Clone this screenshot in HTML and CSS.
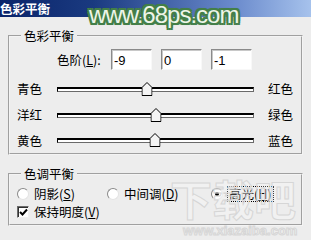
FILE: index.html
```html
<!DOCTYPE html>
<html lang="zh-CN">
<head>
    <meta charset="UTF-8">
    <title>色彩平衡</title>
    <link rel="stylesheet" href="styles.css">
</head>
<body>

    <div class="titlebar">色彩平衡</div>

    <div class="dialog">
        <fieldset class="group balance">
            <legend>色彩平衡</legend>

            <div class="levels">
                <label class="levels-label">色阶(<u>L</u>):</label>
                <input class="num" type="text" value="-9">
                <input class="num" type="text" value="0">
                <input class="num" type="text" value="-1">
            </div>

            <div class="slider-row">
                <span class="end">青色</span>
                <div class="track">
                    <span class="thumb" style="left: 45.5%">
                        <svg width="11" height="14" viewBox="0 0 11 14"><polygon points="0.5,13.5 0.5,5.5 5.5,0.5 10.5,5.5 10.5,13.5" fill="#f4f4f4" stroke="#000"/></svg>
                    </span>
                </div>
                <span class="end right">红色</span>
            </div>

            <div class="slider-row">
                <span class="end">洋红</span>
                <div class="track">
                    <span class="thumb" style="left: 50%">
                        <svg width="11" height="14" viewBox="0 0 11 14"><polygon points="0.5,13.5 0.5,5.5 5.5,0.5 10.5,5.5 10.5,13.5" fill="#f4f4f4" stroke="#000"/></svg>
                    </span>
                </div>
                <span class="end right">绿色</span>
            </div>

            <div class="slider-row">
                <span class="end">黄色</span>
                <div class="track">
                    <span class="thumb" style="left: 49.5%">
                        <svg width="11" height="14" viewBox="0 0 11 14"><polygon points="0.5,13.5 0.5,5.5 5.5,0.5 10.5,5.5 10.5,13.5" fill="#f4f4f4" stroke="#000"/></svg>
                    </span>
                </div>
                <span class="end right">蓝色</span>
            </div>
        </fieldset>

        <fieldset class="group tone">
            <legend>色调平衡</legend>

            <div class="radios">
                <div class="option">
                    <span class="radio"></span>
                    <span class="opt-text">阴影(<u>S</u>)</span>
                </div>
                <div class="option">
                    <span class="radio"></span>
                    <span class="opt-text">中间调(<u>D</u>)</span>
                </div>
                <div class="option">
                    <span class="radio checked"></span>
                    <span class="opt-text focus">高光(<u>H</u>)</span>
                </div>
            </div>

            <div class="option check-row">
                <span class="checkbox">
                    <svg width="9" height="9" viewBox="0 0 9 9"><path d="M1 4 L3.5 6.5 L8 1.5" fill="none" stroke="#000" stroke-width="2"/></svg>
                </span>
                <span class="opt-text">保持明度(<u>V</u>)</span>
            </div>
        </fieldset>
    </div>

    <!-- watermarks laid over the screenshot -->
    <div class="watermark">www.68ps.com</div>
    <div class="xzb">下载吧</div>
    <div class="xzb-url">www.xiazaiba.com</div>

</body>
</html>
```

FILE: styles.css
```css
body {
    margin: 0;
    padding: 0;
    width: 311px;
    height: 240px;
    overflow: hidden;
    background-color: #ededed;
    font-family: "Noto Sans CJK SC", "Liberation Sans", sans-serif;
    font-size: 12.5px;
    color: #000;
    position: relative;
}

.titlebar {
    height: 17px;
    line-height: 17px;
    padding-left: 0;
    background: linear-gradient(to right, #0a246a 0%, #1a3a80 30%, #6a8acc 75%, #a6c2ec 100%);
    color: #fff;
    font-weight: bold;
    font-size: 12.5px;
}

.dialog {
    padding: 12px 8px 0 8px;
}

.group {
    margin: 0;
    border: 2px groove #f4f4f4;
    padding: 6px 8px 0 7px;
}

.group legend {
    margin-left: 4px;
    padding: 0 3px;
    line-height: 14px;
    height: 14px;
}

.levels {
    display: flex;
    align-items: center;
    gap: 9px;
    padding-left: 40px;
    height: 21px;
    margin-bottom: 6px;
}

.levels-label {
    width: 45px;
    white-space: nowrap;
    line-height: 14px;
}

.num {
    box-sizing: border-box;
    width: 41px;
    height: 21px;
    margin: 0;
    padding: 1px 2px 0 2px;
    font-family: "Liberation Sans", sans-serif;
    font-size: 13px;
    background-color: #fff;
    border: 1px solid;
    border-color: #8a8a8a #f8f8f8 #f8f8f8 #8a8a8a;
    box-shadow: inset 1px 1px #c8c8c8;
    outline: none;
}

.slider-row {
    display: grid;
    grid-template-columns: 40px 197px 1fr;
    align-items: center;
    height: 26px;
}

.slider-row:last-child {
    height: 25px;
}

.end {
    line-height: 14px;
}

.end.right {
    padding-left: 14px;
}

.track {
    position: relative;
    box-sizing: border-box;
    height: 5px;
    background-color: #fff;
    border: 1px solid #000;
    border-top-width: 2px;
    border-bottom-color: #6a6a6a;
    border-right-color: #6a6a6a;
}

.thumb {
    position: absolute;
    top: -7px;
    width: 11px;
    height: 14px;
    transform: translateX(-50%);
}

.thumb svg {
    display: block;
}

.tone {
    margin-top: 12px;
    padding-top: 4px;
    padding-bottom: 3px;
}

.radios {
    display: grid;
    grid-template-columns: 90px 104px auto;
    height: 18px;
    align-items: center;
}

.option {
    display: flex;
    align-items: center;
}

.check-row {
    height: 18px;
}

.radio {
    box-sizing: border-box;
    width: 12px;
    height: 12px;
    border-radius: 50%;
    background-color: #fff;
    border: 1px solid;
    border-color: #8a8a8a #e4e4e4 #e4e4e4 #8a8a8a;
    display: flex;
    align-items: center;
    justify-content: center;
}

.radio.checked::after {
    content: "";
    width: 4px;
    height: 4px;
    border-radius: 50%;
    background-color: #000;
}

.checkbox {
    box-sizing: border-box;
    width: 12px;
    height: 12px;
    background-color: #fff;
    border: 1px solid;
    border-color: #6a6a6a #f0f0f0 #f0f0f0 #6a6a6a;
    box-shadow: inset 1px 1px #303030;
    display: flex;
    align-items: center;
    justify-content: center;
    padding: 1px 0 0 1px;
}

.checkbox svg {
    display: block;
}

.opt-text {
    margin-left: 5px;
    line-height: 14px;
    white-space: nowrap;
}

.opt-text.focus {
    margin-left: 4px;
    padding: 0 1px;
    border: 1px dotted #000;
}

.watermark {
    position: absolute;
    left: 89px;
    top: 3px;
    font-family: "Liberation Sans", sans-serif;
    font-size: 24px;
    line-height: 24px;
    letter-spacing: -1px;
    color: #eef5e8;
    text-shadow:
        2px 0 #437f48, -2px 0 #437f48, 0 2px #437f48, 0 -2px #437f48,
        2px 2px #437f48, -2px -2px #437f48, 2px -2px #437f48, -2px 2px #437f48,
        0 0 3px #437f48;
}

.xzb {
    position: absolute;
    left: 170px;
    top: 172px;
    font-size: 42px;
    line-height: 52px;
    font-weight: bold;
    color: rgba(255, 255, 255, 0.25);
    -webkit-text-stroke: 1px #d6d6d6;
    pointer-events: none;
}

.xzb-url {
    position: absolute;
    left: 183px;
    top: 224px;
    font-family: "Liberation Sans", sans-serif;
    font-size: 13px;
    line-height: 13px;
    font-weight: bold;
    color: rgba(255, 255, 255, 0.25);
    -webkit-text-stroke: 1px #d6d6d6;
    pointer-events: none;
}
```
